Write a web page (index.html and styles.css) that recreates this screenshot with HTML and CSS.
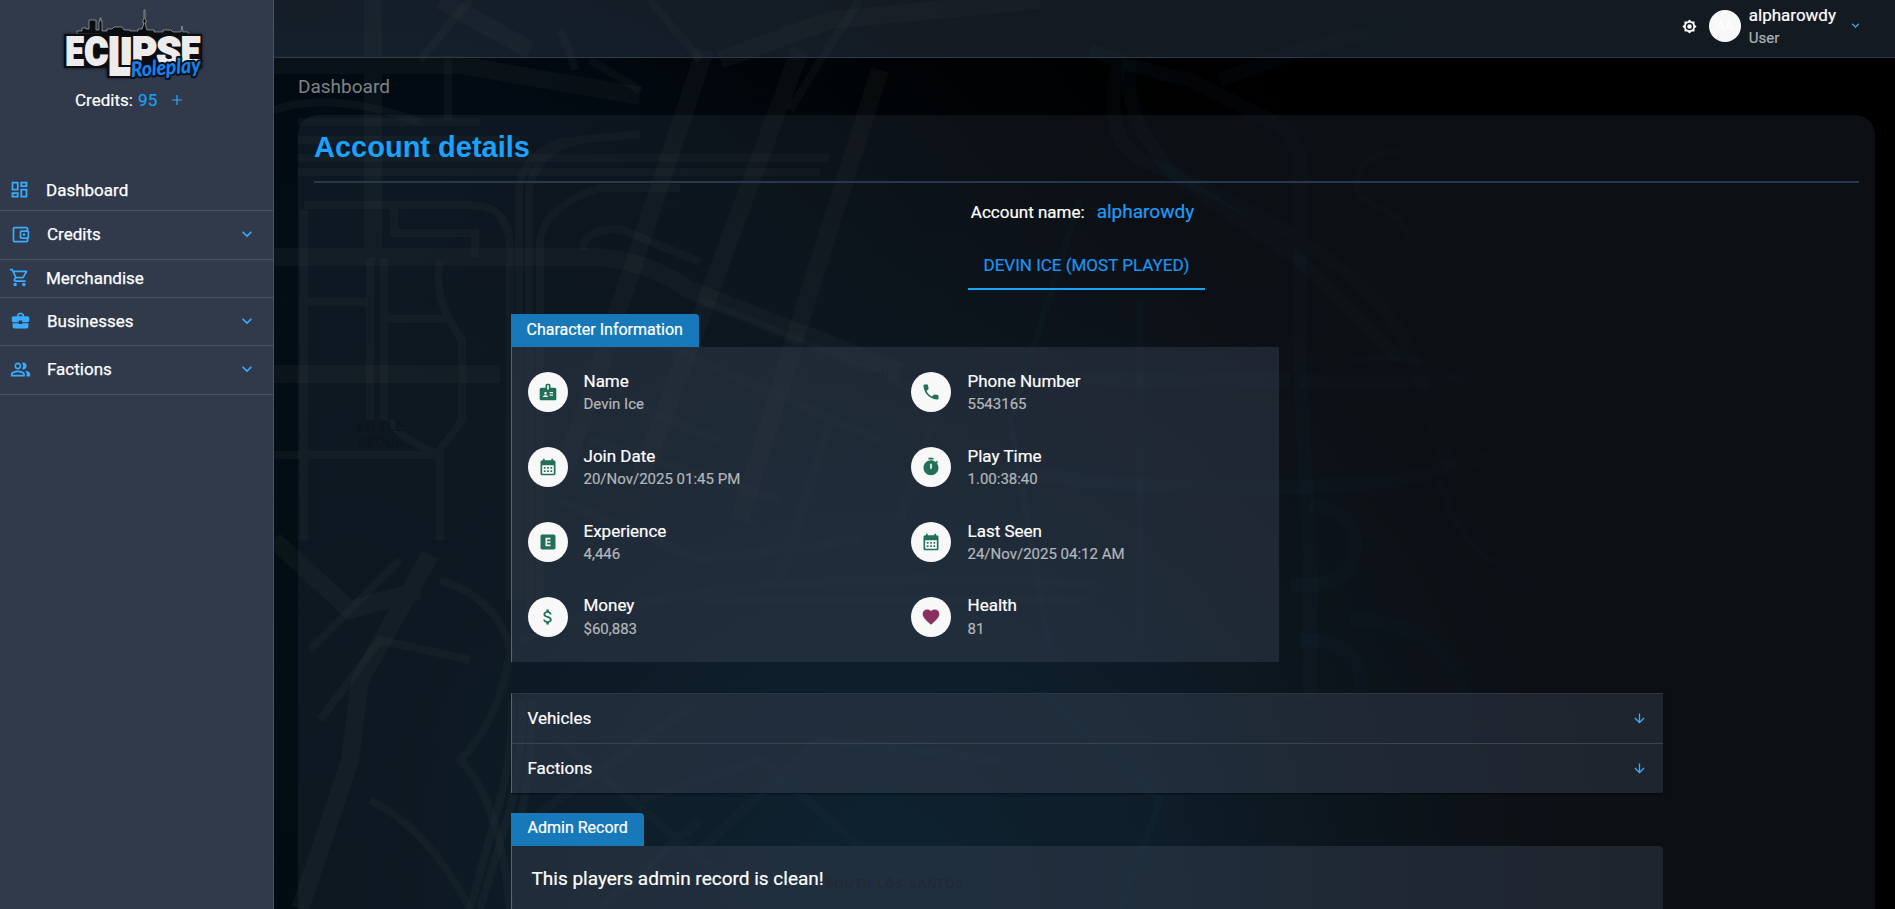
FILE: index.html
```html
<!DOCTYPE html>
<html lang="en">
<head>
<meta charset="utf-8">
<title>Dashboard</title>
<link rel="stylesheet" href="styles.css">
</head>
<body>
<svg class="map" viewBox="0 0 1895 909" aria-hidden="true">
  <defs>
    <radialGradient id="glowA" cx="880" cy="900" r="860" gradientUnits="userSpaceOnUse"><stop offset="0" stop-color="#031a27"/><stop offset=".35" stop-color="#03131d"/><stop offset="1" stop-color="#000" stop-opacity="0"/></radialGradient>
    <radialGradient id="glowB" cx="340" cy="640" r="1100" gradientUnits="userSpaceOnUse"><stop offset="0" stop-color="#03111a"/><stop offset=".5" stop-color="#020b14"/><stop offset="1" stop-color="#000" stop-opacity="0"/></radialGradient>
    <linearGradient id="fade" x1="274" x2="1700" y1="0" y2="0" gradientUnits="userSpaceOnUse"><stop offset="0" stop-color="#fff"/><stop offset=".45" stop-color="#ddd"/><stop offset=".72" stop-color="#999"/><stop offset="1" stop-color="#000"/></linearGradient>
    <mask id="edge" maskUnits="userSpaceOnUse" x="0" y="0" width="1895" height="909"><rect width="1895" height="909" fill="url(#fade)"/></mask>
  </defs>
  <rect width="1895" height="909" fill="#000"/>
  <rect width="1895" height="909" fill="url(#glowB)"/>
  <rect width="1895" height="909" fill="url(#glowA)"/>
  <g mask="url(#edge)" class="roads">
    <g stroke-width="18">
      <path d="M373 0V258M274 65H460L640 96M274 257H590Q640 257 690 290L900 372"/>
      <path d="M705 50L565 470M800 50L640 480M880 70L810 290 740 520M274 374H500M720 60L830 20 1040 0"/>
      <path d="M440 0L530 50M430 555L360 680 350 760 300 909M274 540L350 610 420 590"/>
    </g>
    <g stroke-width="8">
      <path d="M298 140H520M298 158H830M298 172H820M298 122H480M304 205H470Q510 205 510 250V600M394 205V233H475V257"/>
      <path d="M519 600V190Q519 160 560 142L640 134M529 620V190Q538 140 600 138M540 600V240Q546 205 600 188H680M583 250Q583 229 620 229L700 262"/>
      <path d="M370 258V420M384 258V420M304 210V540M304 302H366M384 319H450M440 262Q432 300 462 340V420L440 450V540M274 455H440Q400 440 390 420"/>
      <path d="M274 110Q330 90 420 122M448 60V120M575 70Q570 50 560 30M590 60L640 90M470 0L420 60M650 0L700 60M860 0Q820 60 790 110"/>
      <path d="M440 580Q500 600 510 650Q500 720 460 760Q500 800 510 909M310 650L400 560M320 720L380 640 470 660M370 800Q430 830 470 909"/>
      <path d="M512 700Q512 760 500 800L470 909M522 700Q522 760 510 810L480 909M532 700Q532 770 520 820"/>
    </g>
    <g stroke-width="9" opacity=".75">
      <path d="M590 440L780 500M630 330L880 440M620 400L720 440M560 500L700 560 860 540M700 600H1090M520 640Q700 560 1100 585M700 300L940 400 900 520M830 420L780 580"/>
      <path d="M530 820L700 700M560 740L760 909M700 850L820 740 1000 760M640 800L760 760 900 880M600 909L700 820"/>
    </g>
    <g class="cool" stroke-width="14">
      <path d="M1090 50Q1140 70 1190 80L1270 120Q1300 135 1300 170V370L1310 560V700M1120 60Q1100 130 1140 160Q1220 190 1300 240T1410 350L1450 470"/>
      <path d="M1130 60Q1120 120 1180 180L1300 260 1400 360M1300 382H1500M1000 470Q1200 500 1400 480L1540 445M1220 80L1300 50 1500 0"/>
      <path d="M1000 380H1290M1310 505Q1360 510 1355 550T1290 585M1300 640Q1370 640 1360 700M1350 620Q1450 620 1465 700M1540 470Q1560 540 1590 570L1700 850"/>
    </g>
    <g class="cool" stroke-width="7">
      <path d="M1400 150Q1350 155 1358 195L1400 220 1450 300 1480 325H1540M1350 360Q1420 350 1460 380M1440 480Q1460 560 1540 585M1080 200L1010 420 1050 650M1140 300V640M1040 690L1160 800 1120 909"/>
    </g>
  </g>
  <g class="district">
    <text x="300" y="10">ROCKFORD</text><text x="296" y="23">HILLS</text>
    <text x="381" y="431">LITTLE</text><text x="381" y="447">SEOUL</text>
    <text x="849" y="380">DOWNTOWN</text><text x="895" y="888">SOUTH LOS SANTOS</text>
  </g>
</svg>

<svg class="sprite" aria-hidden="true">
  <symbol id="chev" viewBox="0 0 24 24"><path d="M7.41 8.59 12 13.17l4.59-4.58L18 10l-6 6-6-6z"/></symbol>
  <symbol id="down" viewBox="0 0 24 24"><path d="m20 12-1.41-1.41L13 16.17V4h-2v12.17l-5.58-5.59L4 12l8 8z"/></symbol>
  <symbol id="cal" viewBox="0 0 24 24"><path fill-rule="evenodd" d="M19 4h-1V2h-2v2H8V2H6v2H5c-1.100 0-2 .9-2 2v14c0 1.100.9 2 2 2h14c1.100 0 2-.9 2-2V6c0-1.100-.9-2-2-2zm0 16H5V10h14zM9 14H7v-2h2zm4 0h-2v-2h2zm4 0h-2v-2h2zm-8 4H7v-2h2zm4 0h-2v-2h2zm4 0h-2v-2h2z"/></symbol>
</svg>

<div class="app">
  <aside class="sidebar">
    <svg class="logo" viewBox="0 0 144 76">
      <path class="city" d="M14 26v-3h5v-3h4v1h3v-9h7v10h3v-9h1v-3h1v3h1v10h5v-2h5l2-2h8l2 3h6v1h8v-2h4l2-6h-1v-3l1-1v-9h1v9l1 1v3h-1l2 7h7v2h9v-2h8l2 2h8l1-6 1 6h5l2 4z"/>
      <path class="plate" d="M1.500 26.500H138.500V60H70V69.500H44.500V59.500H1.500z"/>
      <g class="letters" font-size="39">
        <text x="2.500" y="57" textLength="18" lengthAdjust="spacingAndGlyphs">E</text><text x="21.500" y="57" textLength="23.500" lengthAdjust="spacingAndGlyphs">C</text><text x="45" y="67" font-size="53" textLength="23" lengthAdjust="spacingAndGlyphs">L</text><text x="57" y="56" font-size="37" textLength="12.500" lengthAdjust="spacingAndGlyphs">I</text><text x="69" y="57" textLength="25" lengthAdjust="spacingAndGlyphs">P</text><text x="93.500" y="57" textLength="24.500" lengthAdjust="spacingAndGlyphs">S</text><text x="118" y="57" textLength="19" lengthAdjust="spacingAndGlyphs">E</text>
      </g>
      <text class="script" transform="rotate(-4 68 67)" x="68" y="69" textLength="70" lengthAdjust="spacingAndGlyphs">Roleplay</text>
    </svg>
    <div class="credits">Credits: <span class="amount">95</span><svg class="plus" viewBox="0 0 10 10"><path d="M4.400 0h1.200v4.400H10v1.200H5.600V10H4.400V5.600H0V4.400h4.400z"/></svg></div>
    <nav class="nav">
      <a class="item flat first"><svg viewBox="0 0 24 24"><path d="M19 5v2h-4V5zM9 5v6H5V5zm10 8v6h-4v-6zM9 17v2H5v-2zM21 3h-8v6h8zM11 3H3v10h8zm10 8h-8v10h8zm-10 4H3v6h8z"/></svg><span>Dashboard</span></a>
      <a class="item tall"><svg viewBox="0 0 24 24"><path fill-rule="evenodd" d="M21 7.280V5c0-1.100-.9-2-2-2H5c-1.110 0-2 .9-2 2v14c0 1.100.89 2 2 2h14c1.100 0 2-.9 2-2v-2.280c.59-.35 1-.98 1-1.720V9c0-.74-.41-1.370-1-1.720zM20 9v6h-7V9zM5 19V5h14v2h-6c-1.100 0-2 .9-2 2v6c0 1.100.9 2 2 2h6v2z"/><circle cx="16" cy="12" r="1.500"/></svg><span>Credits</span><svg class="chev"><use href="#chev"/></svg></a>
      <a class="item flat"><svg viewBox="0 0 24 24"><path d="M15.550 13c.75 0 1.410-.41 1.750-1.030l3.580-6.490A.996.996 0 0 0 20.010 4H5.210l-.94-2H1v2h2l3.600 7.590-1.350 2.440C4.520 15.370 5.480 17 7 17h12v-2H7l1.100-2zM6.160 6h12.150l-2.760 5H8.530zM7 18c-1.100 0-1.990.9-1.990 2S5.900 22 7 22s2-.9 2-2-.9-2-2-2m10 0c-1.100 0-1.990.9-1.990 2s.89 2 1.990 2 2-.9 2-2-.9-2-2-2"/></svg><span>Merchandise</span></a>
      <a class="item tall short"><svg viewBox="0 0 24 24"><path d="M10 16v-1H3.010L3 19c0 1.110.89 2 2 2h14c1.110 0 2-.89 2-2v-4h-7v1zm10-9h-4.010V5l-2-2h-4l-2 2v2H4c-1.100 0-2 .9-2 2v3c0 1.110.89 2 2 2h6v-2h4v2h6c1.100 0 2-.9 2-2V9c0-1.100-.9-2-2-2m-6 0h-4V5h4z"/></svg><span>Businesses</span><svg class="chev"><use href="#chev"/></svg></a>
      <a class="item tall"><svg viewBox="0 0 24 24"><path d="M16.670 13.130C18.040 14.060 19 15.320 19 17v3h4v-3c0-2.180-3.570-3.470-6.330-3.870M15 12c2.210 0 4-1.790 4-4s-1.790-4-4-4c-.47 0-.91.1-1.330.24C14.500 5.270 15 6.580 15 8s-.5 2.730-1.330 3.760c.42.14.86.24 1.330.24m-6 0c2.210 0 4-1.790 4-4s-1.790-4-4-4-4 1.790-4 4 1.790 4 4 4m0-6c1.100 0 2 .9 2 2s-.9 2-2 2-2-.9-2-2 .9-2 2-2m0 7c-2.670 0-8 1.340-8 4v3h16v-3c0-2.660-5.330-4-8-4m6 5H3v-.99C3.200 16.290 6.300 15 9 15s5.800 1.290 6 2z"/></svg><span>Factions</span><svg class="chev"><use href="#chev"/></svg></a>
    </nav>
  </aside>

  <div class="page">
    <header class="topbar">
      <svg class="theme" viewBox="0 0 24 24"><path fill-rule="evenodd" d="M20 15.310 23.310 12 20 8.690V4h-4.690L12 .69 8.690 4H4v4.690L.69 12 4 15.310V20h4.690L12 23.310 15.310 20H20zM12 18a6 6 0 1 1 0-12 6 6 0 0 1 0 12z"/><circle cx="12" cy="12" r="3.600"/></svg>
      <span class="avatar">AA</span>
      <div class="who"><div class="login">alpharowdy</div><div class="role">User</div></div>
      <svg class="menu"><use href="#chev"/></svg>
    </header>
    <main class="main">
      <div class="crumb">Dashboard</div>
      <section class="card">
        <h1>Account details</h1>
        <div class="account">Account name:<a>alpharowdy</a></div>
        <div class="tabs"><button class="tab">DEVIN ICE (MOST PLAYED)</button></div>
        <div class="content">
          <div class="label">Character Information</div>
          <div class="info">
            <div class="field"><i class="dot"><svg viewBox="0 0 24 24"><path fill-rule="evenodd" d="M20 7h-5V4c0-1.100-.9-2-2-2h-2c-1.100 0-2 .9-2 2v3H4c-1.100 0-2 .9-2 2v11c0 1.100.9 2 2 2h16c1.100 0 2-.9 2-2V9c0-1.100-.9-2-2-2M9 12c.83 0 1.500.67 1.500 1.500S9.830 15 9 15s-1.500-.67-1.500-1.500S8.170 12 9 12m3 6H6v-.75c0-1 2-1.500 3-1.500s3 .5 3 1.500zm1-9h-2V4h2zm5 7.500h-4V15h4zm0-3h-4V12h4z"/></svg></i><div><div class="key">Name</div><div class="value">Devin Ice</div></div></div>
            <div class="field"><i class="dot"><svg viewBox="0 0 24 24"><path d="M6.620 10.790c1.440 2.830 3.760 5.140 6.590 6.590l2.200-2.200c.27-.27.67-.36 1.020-.24 1.120.37 2.330.57 3.570.57.55 0 1 .45 1 1V20c0 .55-.45 1-1 1-9.390 0-17-7.610-17-17 0-.55.45-1 1-1h3.500c.55 0 1 .45 1 1 0 1.250.2 2.450.57 3.570.11.35.03.74-.25 1.020z"/></svg></i><div><div class="key">Phone Number</div><div class="value">5543165</div></div></div>
            <div class="field"><i class="dot"><svg><use href="#cal"/></svg></i><div><div class="key">Join Date</div><div class="value">20/Nov/2025 01:45 PM</div></div></div>
            <div class="field"><i class="dot"><svg viewBox="0 0 24 24"><path d="M9 1h6v2H9zm10.030 6.390 1.420-1.420c-.43-.51-.9-.99-1.410-1.410l-1.420 1.420C16.070 4.740 14.120 4 12 4c-4.970 0-9 4.030-9 9s4.020 9 9 9 9-4.030 9-9c0-2.120-.74-4.070-1.970-5.610M13 14h-2V8h2z"/></svg></i><div><div class="key">Play Time</div><div class="value">1.00:38:40</div></div></div>
            <div class="field"><i class="dot"><svg viewBox="0 0 24 24"><path d="M19 3H5c-1.100 0-2 .9-2 2v14c0 1.100.9 2 2 2h14c1.100 0 2-.9 2-2V5c0-1.100-.9-2-2-2m-4 6h-4v2h4v2h-4v2h4v2H9V7h6z"/></svg></i><div><div class="key">Experience</div><div class="value">4,446</div></div></div>
            <div class="field"><i class="dot"><svg><use href="#cal"/></svg></i><div><div class="key">Last Seen</div><div class="value">24/Nov/2025 04:12 AM</div></div></div>
            <div class="field"><i class="dot"><svg viewBox="0 0 24 24"><path d="M11.800 10.900c-2.270-.59-3-1.200-3-2.150 0-1.090 1.010-1.850 2.700-1.850 1.780 0 2.440.85 2.500 2.100h2.210c-.07-1.720-1.120-3.300-3.210-3.810V3h-3v2.160c-1.940.42-3.500 1.680-3.500 3.610 0 2.310 1.910 3.460 4.700 4.130 2.500.6 3 1.480 3 2.410 0 .69-.49 1.790-2.700 1.790-2.060 0-2.870-.92-2.980-2.100h-2.200c.12 2.190 1.760 3.420 3.680 3.830V21h3v-2.150c1.950-.37 3.500-1.500 3.500-3.550 0-2.840-2.430-3.810-4.700-4.400"/></svg></i><div><div class="key up">Money</div><div class="value">$60,883</div></div></div>
            <div class="field"><i class="dot heart"><svg viewBox="0 0 24 24"><path d="m12 21.350-1.450-1.320C5.400 15.360 2 12.280 2 8.500 2 5.420 4.420 3 7.500 3c1.740 0 3.410.81 4.500 2.090C13.090 3.810 14.760 3 16.500 3 19.580 3 22 5.420 22 8.500c0 3.780-3.400 6.860-8.550 11.540z"/></svg></i><div><div class="key up">Health</div><div class="value">81</div></div></div>
          </div>
          <div class="accordion">
            <div class="fold"><span>Vehicles</span><svg><use href="#down"/></svg></div>
            <div class="fold"><span>Factions</span><svg><use href="#down"/></svg></div>
          </div>
          <div class="label admin">Admin Record</div>
          <div class="record">This players admin record is clean!</div>
        </div>
      </section>
    </main>
  </div>
</div>
</body>
</html>
```

FILE: styles.css
```css
* { box-sizing: border-box; }
html, body { height: 100%; }
body { margin: 0; overflow: hidden; background: #000; color: #fff; font: 17px/20px Roboto, sans-serif; }
svg { display: block; fill: currentColor; }

.map { position: absolute; inset: 0; width: 1895px; height: 909px; z-index: -1; }
.roads path { fill: none; stroke: #858478; stroke-opacity: .065; }
.roads .cool path { stroke: #2a6a9a; stroke-opacity: .075; }
.district { font: 700 12px "Liberation Sans", sans-serif; fill: #03070a; text-anchor: middle; letter-spacing: 1px; }
.sprite { display: none; }

.app { display: flex; height: 100vh; }

.sidebar { width: 274px; flex: none; background: #303a4b; border-right: 1px solid #475464; display: flex; flex-direction: column; }
.logo { width: 144px; height: 76px; margin: 8px 0 0 63px; flex: none; overflow: visible; }
.city { fill: #0b0d10; stroke: #a9b0b8; stroke-width: .7; }
.plate { fill: #0b0d10; stroke: #0b0d10; stroke-width: 1; stroke-linejoin: round; filter: drop-shadow(0 0 1.5px #0b0d10); }
.letters { font-family: Roboto, sans-serif; font-weight: 900; fill: #ececec; stroke: #ececec; stroke-width: 1.8; }
.script { font: italic 900 21px Lato, sans-serif; fill: #1683e8; stroke: #07101c; stroke-width: 4; paint-order: stroke; stroke-linejoin: round; }
.credits { display: flex; align-items: center; white-space: pre; margin: 6px 0 0 75px; height: 20px; -webkit-text-stroke: .2px; }
.amount { color: #1f9ff5; margin-left: 1px; }
.plus { width: 10px; height: 10px; margin-left: 15px; color: #32a8ff; }
.nav { margin-top: 63px; color: #fff; }
.item { display: flex; align-items: center; border-bottom: 1px solid #475464; padding: 0 0 2px 9px; height: 38px; }
.item svg { width: 21px; height: 21px; color: #3aabff; flex: none; }
.item span { margin-left: 16px; flex: 1; -webkit-text-stroke: .25px; }
.item.first { padding-bottom: 4px; }
.item.tall { height: 49px; padding-left: 10px; }
.item.short { height: 48px; }
.item .chev { width: 20px; height: 20px; margin-right: 16px; }

.page { flex: 1; min-width: 0; display: flex; flex-direction: column; }
.topbar { height: 58px; flex: none; display: flex; justify-content: flex-end; align-items: flex-start; padding-right: 32px; background: rgba(48, 64, 80, .41); border-bottom: 1px solid #2a3b50; }
.theme { width: 15px; height: 15px; margin-top: 19px; }
.avatar { width: 32px; height: 32px; margin: 10px 0 0 12px; border-radius: 50%; background: #f8f8f8; color: #fff; display: flex; align-items: center; justify-content: center; font-size: 13px; }
.who { margin-left: 8px; padding-top: 5px; }
.login { height: 22px; -webkit-text-stroke: .2px; }
.role { font-size: 15px; color: #b0b1b2; line-height: 22px; -webkit-text-stroke: .2px; }
.menu { width: 15px; height: 15px; margin: 18px 0 0 12px; color: #35a8f8; }

.main { flex: 1; min-height: 0; padding: 18px 20px 0 24px; display: flex; flex-direction: column; }
.crumb { font-size: 19px; color: #818283; height: 39px; line-height: 22px; flex: none; padding-top: 0; }
.card { flex: 1; min-height: 0; border-radius: 20px 20px 0 0; background: rgba(48, 60, 76, .25); padding: 15px 16px 0; display: flex; flex-direction: column; align-items: center; overflow: hidden; }
h1 { align-self: stretch; flex: none; height: 53px; margin: 0; border-bottom: 2px solid #26384d; color: #1ba2ff; font: 700 29px/34px "Liberation Sans", Arial, sans-serif; }
.account { display: flex; align-items: center; height: 22px; margin-top: 19px; margin-right: 8px; -webkit-text-stroke: .2px; }
.account a { font-size: 19px; color: #1f9cf7; margin-left: 12px; }
.tabs { margin-top: 20px; flex: none; }
.tab { display: block; border: 0; border-bottom: 2px solid #1ba2ff; background: none; padding: 12px 15px; width: 237px; height: 48px; color: #1b96f0; font: 17px/20px Roboto, sans-serif; white-space: nowrap; -webkit-text-stroke: .2px; }
.content { width: 1152px; flex: none; display: flex; flex-direction: column; align-items: flex-start; margin-top: 24px; -webkit-text-stroke: .2px; }
.label { height: 33px; padding: 0 16px; background: #1779ba; border-radius: 0 4px 0 0; font-size: 16px; line-height: 31px; }
.info { width: 768px; height: 315px; padding-top: 25px; padding-left: 16px; display: grid; grid-template-columns: 383px 1fr; grid-auto-rows: 75px; background: rgba(52, 63, 80, .48); border-left: 1px solid #1779ba; }
.field { display: flex; align-items: flex-start; }
.dot { width: 40px; height: 40px; border-radius: 50%; background: #f8f8f8; color: #22705a; display: flex; align-items: center; justify-content: center; margin-right: 16px; }
.field:nth-child(even) .dot { margin-right: 17px; }
.dot svg { width: 20px; height: 20px; }
.dot.heart { color: #8a3060; }
.key { height: 23px; line-height: 18px; }
.key.up { position: relative; top: -1px; }
.value { font-size: 15px; line-height: 18px; color: #b3b6ba; }
.accordion { width: 100%; margin-top: 31px; border-top: 1px solid #2c3640; border-left: 1px solid #1779ba; box-shadow: 0 1px 2px rgba(0, 0, 0, .5); background: rgba(52, 63, 80, .48); }
.fold { height: 49px; display: flex; align-items: center; justify-content: space-between; padding: 0 16px; }
.fold span { padding-bottom: 2px; }
.fold + .fold { height: 50px; border-top: 1px solid #3a444f; }
.fold svg { width: 15px; height: 15px; color: #3aabff; }
.admin { margin-top: 20px; padding-left: 17px; line-height: 30px; }
.record { width: 100%; height: 100px; padding: 22px 20px; border-left: 1px solid #1779ba; border-radius: 0 4px 0 0; background: rgba(52, 63, 80, .48); font-size: 19px; line-height: 22px; }
```
